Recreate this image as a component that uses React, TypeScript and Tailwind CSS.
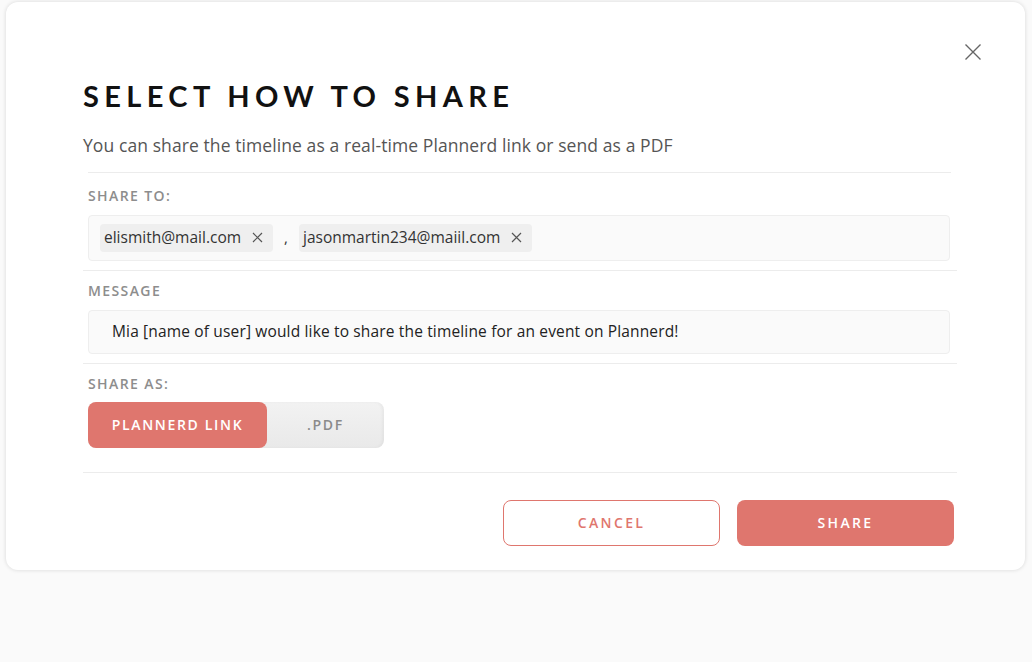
import React, { useState } from "react";

const coral = "bg-[#df766e]";

function Chip({ label }: { label: string }) {
  return (
    <span className="flex h-[28px] items-center gap-[11px] rounded-[4px] bg-[#efefef] pl-[4px] pr-[10px] text-[15.5px] text-[#333]">
      {label}
      <svg width="11" height="11" viewBox="0 0 11 11" className="text-[#555]">
        <path d="M1 1l9 9M10 1l-9 9" stroke="currentColor" strokeWidth="1.2" />
      </svg>
    </span>
  );
}

function Label({ children }: { children: React.ReactNode }) {
  return (
    <div className="px-[5px] text-[14px] font-semibold leading-none tracking-[0.1em] text-[#8d8d8d]">
      {children}
    </div>
  );
}

export default function App() {
  const [mode, setMode] = useState<"link" | "pdf">("link");

  return (
    <div
      className="h-[662px] w-full bg-[#fafafa] px-[6px] pt-[2px]"
      style={{ fontFamily: "'Open Sans', 'Noto Sans', sans-serif" }}
    >
      <div className="relative h-[568px] w-[1019px] rounded-[12px] bg-white pl-[77px] pr-[68px] pt-[79px] shadow-[0_0_4px_rgba(0,0,0,0.14)]">
        {/* close */}
        <button className="absolute right-[43px] top-[41px] text-[#666]">
          <svg width="18" height="18" viewBox="0 0 18 18">
            <path d="M1.5 1.5l15 15M16.5 1.5l-15 15" stroke="currentColor" strokeWidth="1.4" />
          </svg>
        </button>

        <h1
          className="text-[29px] font-bold leading-none tracking-[0.185em] text-[#111]"
          style={{ fontFamily: "Lato, sans-serif" }}
        >
          SELECT HOW TO SHARE
        </h1>
        <p className="mt-[27px] text-[17.5px] leading-none tracking-[0.005em] text-[#555]">
          You can share the timeline as a real-time Plannerd link or send as a PDF
        </p>

        <div className="ml-[5px] mr-[6px] mt-[17px] h-px bg-[#ececec]" />

        <div className="pt-[16px]">
          <Label>SHARE TO:</Label>
          <div className="ml-[5px] mr-[7px] mt-[12px] flex h-[46px] items-center gap-[11px] rounded-[4px] border border-[#eeeeee] bg-[#fafafa] px-[11px]">
            <Chip label="elismith@mail.com" />
            <span className="text-[15px] text-[#333]">,</span>
            <Chip label="jasonmartin234@maiil.com" />
          </div>
        </div>

        <div className="mt-[9px] h-px bg-[#ececec]" />

        <div className="pt-[13px]">
          <Label>MESSAGE</Label>
          <div className="ml-[5px] mr-[7px] mt-[12px] flex h-[44px] items-center rounded-[4px] border border-[#eeeeee] bg-[#fafafa] px-[23px] text-[15.5px] tracking-[0.01em] text-[#222]">
            Mia [name of user] would like to share the timeline for an event on Plannerd!
          </div>
        </div>

        <div className="mt-[9px] h-px bg-[#ececec]" />

        <div className="pt-[13px]">
          <Label>SHARE AS:</Label>
          <div className="ml-[5px] mt-[11px] flex h-[46px] w-[296px] rounded-[8px] bg-gradient-to-b from-[#f2f2f2] to-[#e9e9e9] shadow-[inset_-2px_0_3px_rgba(0,0,0,0.04)]">
            <button
              onClick={() => setMode("link")}
              className={`w-[179px] rounded-[8px] text-[14px] font-semibold tracking-[0.12em] ${
                mode === "link" ? `${coral} text-white` : "text-[#888]"
              }`}
            >
              PLANNERD LINK
            </button>
            <button
              onClick={() => setMode("pdf")}
              className={`flex-1 rounded-[8px] text-[14px] font-semibold tracking-[0.12em] ${
                mode === "pdf" ? `${coral} text-white` : "text-[#8a8a8a]"
              }`}
            >
              .PDF
            </button>
          </div>
        </div>

        <div className="mt-[24px] h-px bg-[#ececec]" />

        <div className="mr-[3px] mt-[27px] flex justify-end gap-[17px]">
          <button className="h-[46px] w-[217px] rounded-[8px] border-[1.5px] border-[#df766e] text-[14px] font-semibold tracking-[0.17em] text-[#df766e]">
            CANCEL
          </button>
          <button className={`h-[46px] w-[217px] rounded-[8px] ${coral} text-[14px] font-semibold tracking-[0.17em] text-white`}>
            SHARE
          </button>
        </div>
      </div>
    </div>
  );
}
